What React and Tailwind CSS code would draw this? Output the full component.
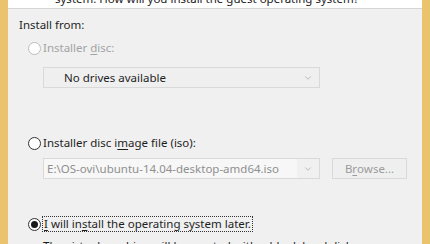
import { ChevronDown } from "lucide-react";

function Radio({ checked, disabled }) {
  return (
    <span
      className={`flex items-center justify-center w-[13px] h-[13px] rounded-full border bg-white shrink-0 ${
        disabled ? "border-[#bcbcbc] bg-[#f4f4f4]" : "border-[#333]"
      }`}
    >
      {checked && <span className="w-[7px] h-[7px] rounded-full bg-[#1a1a1a]" />}
    </span>
  );
}

export default function App() {
  return (
    <div
      className="w-[430px] h-[244px] overflow-hidden flex bg-[#eac36c] text-[11.5px] leading-[16px]"
      style={{ fontFamily: '"Noto Sans", "Open Sans", sans-serif' }}
    >
      <div className="ml-[8px] w-[414px] h-full bg-[#f0f0f0] flex flex-col">
        {/* header strip */}
        <div className="h-[9px] bg-white border-b border-[#d5d5d5] overflow-hidden shrink-0">
          <p className="mt-[-9px] ml-[47px] text-[#222]">
            system. How will you install the guest operating system?
          </p>
        </div>

        <div className="pl-[11px] pr-[15px]">
          <p className="mt-[8px] text-[#1e1e1e]">Install from:</p>

          {/* disc */}
          <div className="mt-[7px] ml-[9px] flex items-center gap-[2px] text-[#a3a3a3]">
            <Radio disabled />
            <span>
              Installer <u className="underline-offset-2">d</u>isc:
            </span>
          </div>
          <div className="mt-[11px] ml-[24px] w-[277px] h-[21px] border border-[#d9d9d9] bg-[#efefef] flex items-center justify-between">
            <span className="ml-[20px] text-[#1e1e1e]">No drives available</span>
            <ChevronDown className="mr-[6px] w-[10px] h-[10px] text-[#b0b0b0]" strokeWidth={2} />
          </div>

          {/* iso */}
          <div className="mt-[47px] ml-[9px] flex items-center gap-[2px] text-[#1e1e1e]">
            <Radio />
            <span>
              Installer disc i<u className="underline-offset-2">m</u>age file (iso):
            </span>
          </div>
          <div className="mt-[7px] ml-[24px] flex items-center gap-[12px]">
            <div className="w-[277px] h-[21px] border border-[#d9d9d9] bg-[#f0f0f0] flex items-center">
              <span className="flex-1 h-full flex items-center bg-[#f7f7f7] pl-[3px] text-[#8f8f8f]">
                E:\OS-ovi\ubuntu-14.04-desktop-amd64.iso
              </span>
              <ChevronDown className="mx-[6px] w-[10px] h-[10px] text-[#b0b0b0]" strokeWidth={2} />
            </div>
            <div className="w-[75px] h-[21px] border border-[#d9d9d9] bg-[#efefef] flex items-center justify-center text-[#9b9b9b]">
              B<u className="underline-offset-2">r</u>owse...
            </div>
          </div>

          {/* later */}
          <div className="mt-[37px] ml-[9px] flex items-center gap-[1px] text-[#1e1e1e]">
            <Radio checked />
            <span className="border border-dotted border-[#333] px-[1px] leading-[14px]">
              <u className="underline-offset-2">I</u> will in<u className="underline-offset-2">s</u>tall the operating system later.
            </span>
          </div>
          <p className="mt-[6px] ml-[24px] text-[#1e1e1e]">
            The virtual machine will be created with a blank hard disk.
          </p>
        </div>
      </div>
    </div>
  );
}
